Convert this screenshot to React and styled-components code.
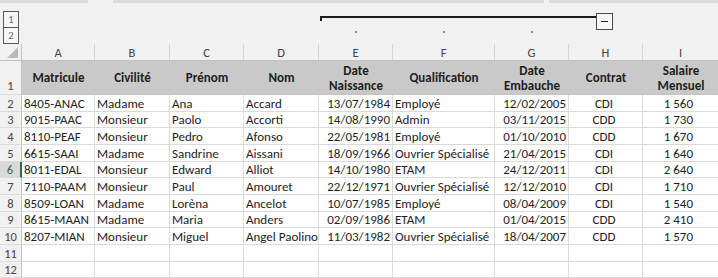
import React from "react";
import styled, { createGlobalStyle } from "styled-components";

const COLS = [
  { key: "A", w: 73, align: "left" },
  { key: "B", w: 75, align: "left" },
  { key: "C", w: 74, align: "left" },
  { key: "D", w: 75, align: "left" },
  { key: "E", w: 74, align: "right" },
  { key: "F", w: 102, align: "left" },
  { key: "G", w: 74, align: "right" },
  { key: "H", w: 74, align: "center" },
  { key: "I", w: 76, align: "salary" },
];
const TEMPLATE = `22px ${COLS.map((c) => c.w + "px").join(" ")}`;

const HEADERS = [
  "Matricule",
  "Civilité",
  "Prénom",
  "Nom",
  "Date\nNaissance",
  "Qualification",
  "Date\nEmbauche",
  "Contrat",
  "Salaire\nMensuel",
];

const ROWS = [
  ["8405-ANAC", "Madame", "Ana", "Accard", "13/07/1984", "Employé", "12/02/2005", "CDI", "1 560"],
  ["9015-PAAC", "Monsieur", "Paolo", "Accorti", "14/08/1990", "Admin", "03/11/2015", "CDD", "1 730"],
  ["8110-PEAF", "Monsieur", "Pedro", "Afonso", "22/05/1981", "Employé", "01/10/2010", "CDD", "1 670"],
  ["6615-SAAI", "Madame", "Sandrine", "Aissani", "18/09/1966", "Ouvrier Spécialisé", "21/04/2015", "CDI", "1 640"],
  ["8011-EDAL", "Monsieur", "Edward", "Alliot", "14/10/1980", "ETAM", "24/12/2011", "CDI", "2 640"],
  ["7110-PAAM", "Monsieur", "Paul", "Amouret", "22/12/1971", "Ouvrier Spécialisé", "12/12/2010", "CDI", "1 710"],
  ["8509-LOAN", "Madame", "Lorèna", "Ancelot", "10/07/1985", "Employé", "08/04/2009", "CDI", "1 540"],
  ["8615-MAAN", "Madame", "Maria", "Anders", "02/09/1986", "ETAM", "01/04/2015", "CDD", "2 410"],
  ["8207-MIAN", "Monsieur", "Miguel", "Angel Paolino", "11/03/1982", "Ouvrier Spécialisé", "18/04/2007", "CDD", "1 570"],
  ["", "", "", "", "", "", "", "", ""],
  ["", "", "", "", "", "", "", "", ""],
];

const GlobalStyle = createGlobalStyle`
  html, body {
    margin: 0;
    padding: 0;
    background: #ffffff;
    overflow: hidden;
  }
  body {
    font-family: Calibri, Carlito, Lato, "Liberation Sans", sans-serif;
    color: #222;
  }
`;

const Page = styled.div`
  width: 718px;
  height: 278px;
  overflow: hidden;
  display: flex;
  flex-direction: column;
`;

const FormulaEdge = styled.div`
  height: 3px;
  display: flex;
  background: #dcdcdc;
`;

const EdgeGap = styled.div`
  margin-left: ${(p) => p.$at}px;
  width: ${(p) => p.$w}px;
  background: #f1f1f1;
`;

const OutlineBar = styled.div`
  display: grid;
  grid-template-columns: ${TEMPLATE};
  grid-template-rows: 26px 15px;
  background: #f1f1f1;
`;

const LevelStack = styled.div`
  grid-column: 1;
  grid-row: 1 / 3;
  display: flex;
  flex-direction: column;
  padding: 8px 0 0 3px;
`;

const LevelButton = styled.div`
  width: 14px;
  height: 15px;
  border: 1px solid #5a5a5a;
  border-top-width: ${(p) => (p.$first ? 1 : 0)}px;
  background: #f6f6f6;
  color: #6a6a6a;
  font-size: 10.5px;
  display: flex;
  align-items: center;
  justify-content: center;
`;

const Bracket = styled.div`
  grid-column: 6 / 10;
  grid-row: 1;
  display: flex;
  align-items: flex-start;
  padding: 10px 30px 0 1px;
`;

const BracketLine = styled.div`
  flex: 1;
  margin-top: 3px;
  height: 3px;
  border-top: 2px solid #1c1c1c;
  border-left: 2px solid #1c1c1c;
`;

const CollapseBox = styled.div`
  width: 15px;
  height: 15px;
  border: 1px solid #4a4a4a;
  background: #f7f7f7;
  display: flex;
  align-items: center;
  justify-content: center;

  &::after {
    content: "";
    width: 7px;
    height: 1px;
    background: #222;
  }
`;

const Dot = styled.div`
  grid-row: 2;
  grid-column: ${(p) => p.$col};
  justify-self: center;
  align-self: start;
  margin-top: 2px;
  width: 2px;
  height: 2px;
  background: #8a8a8a;
`;

const ColumnHeaders = styled.div`
  display: grid;
  grid-template-columns: ${TEMPLATE};
  height: 17px;
  background: #f1f1f1;
  border-bottom: 1px solid #c2c2c2;
  box-sizing: border-box;
`;

const Corner = styled.div`
  border-right: 1px solid #c2c2c2;
  display: flex;
  align-items: flex-end;
  justify-content: flex-end;
  padding: 0 3px 2px 0;

  &::after {
    content: "";
    width: 0;
    height: 0;
    border-left: 11px solid transparent;
    border-bottom: 11px solid #b9b9b9;
  }
`;

const ColLetter = styled.div`
  border-right: 1px solid #d6d6d6;
  display: flex;
  align-items: center;
  justify-content: center;
  font-size: 12.5px;
  color: #444;
`;

const Row = styled.div`
  display: grid;
  grid-template-columns: ${TEMPLATE};
  height: ${(p) => p.$h}px;
  flex-shrink: 0;
`;

const RowNum = styled.div`
  box-sizing: border-box;
  background: ${(p) => (p.$selected ? "#d9d9d9" : "#f1f1f1")};
  border-right: ${(p) => (p.$selected ? "2px solid #217346" : "1px solid #c2c2c2")};
  border-bottom: 1px solid #dcdcdc;
  display: flex;
  align-items: ${(p) => (p.$tall ? "flex-end" : "center")};
  justify-content: center;
  padding-bottom: ${(p) => (p.$tall ? 1 : 0)}px;
  font-size: 12.5px;
  color: ${(p) => (p.$selected ? "#3d6b4d" : "#444")};
`;

const justify = { left: "flex-start", right: "flex-end", center: "center", salary: "flex-end" };

const Cell = styled.div`
  box-sizing: border-box;
  border-right: 1px solid #dadada;
  border-bottom: 1px solid #dadada;
  display: flex;
  align-items: center;
  justify-content: ${(p) => justify[p.$align]};
  padding: 0 ${(p) => (p.$align === "salary" ? 25 : p.$align === "right" ? 2 : 3)}px 0
    ${(p) => (p.$align === "left" ? 2 : 0)}px;
  font-size: 13px;
  color: #1e1e1e;
  white-space: nowrap;
`;

const HeadCell = styled.div`
  box-sizing: border-box;
  background: #c9c9c9;
  border-bottom: 1px solid #c2c2c2;
  display: flex;
  align-items: center;
  justify-content: center;
  text-align: center;
  white-space: pre-line;
  font-size: 13px;
  line-height: 15px;
  font-weight: 700;
  color: #1f1f1f;
`;

const rowHeight = (i) => Math.round(95 + (i + 1) * 16.667) - Math.round(95 + i * 16.667);

export default function App() {
  return (
    <Page>
      <GlobalStyle />
      <FormulaEdge>
        <EdgeGap $at={88} $w={25} />
        <EdgeGap $at={431} $w={5} />
      </FormulaEdge>
      <OutlineBar>
        <LevelStack>
          <LevelButton $first>1</LevelButton>
          <LevelButton>2</LevelButton>
        </LevelStack>
        <Bracket>
          <BracketLine />
          <CollapseBox />
        </Bracket>
        <Dot $col={6} />
        <Dot $col={7} />
        <Dot $col={8} />
      </OutlineBar>
      <ColumnHeaders>
        <Corner />
        {COLS.map((c) => (
          <ColLetter key={c.key}>{c.key}</ColLetter>
        ))}
      </ColumnHeaders>
      <Row $h={34}>
        <RowNum $tall>1</RowNum>
        {HEADERS.map((h) => (
          <HeadCell key={h}>{h}</HeadCell>
        ))}
      </Row>
      {ROWS.map((r, i) => (
        <Row key={i} $h={rowHeight(i)}>
          <RowNum $selected={i === 4}>{i + 2}</RowNum>
          {r.map((v, j) => (
            <Cell key={j} $align={COLS[j].align}>
              {v}
            </Cell>
          ))}
        </Row>
      ))}
    </Page>
  );
}
